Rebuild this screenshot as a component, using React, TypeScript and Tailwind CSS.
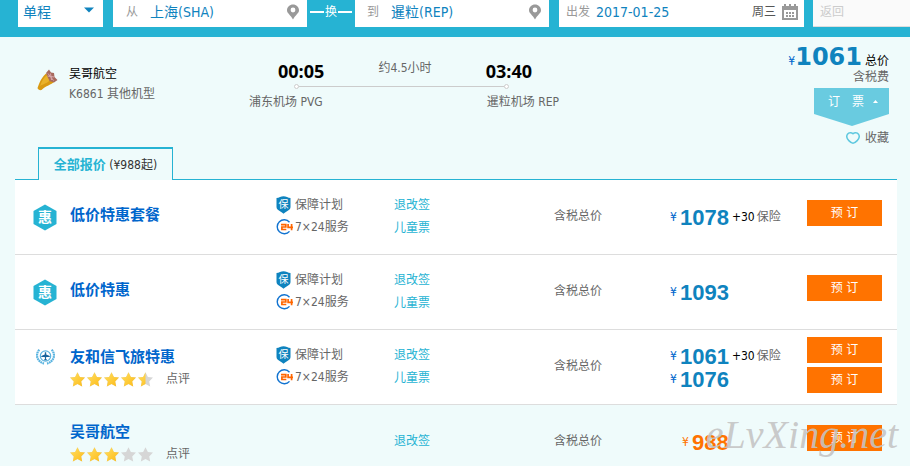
import { ReactNode, useState } from "react";

type Price = { amount: number; insurance?: number };

type Offer = {
  name: string;
  badge?: "deal" | "union";
  stars?: number;
  services: boolean;
  childTicket: boolean;
  prices: Price[];
  cheapest?: boolean;
};

const offers: Offer[] = [
  { name: "低价特惠套餐", badge: "deal", services: true, childTicket: true, prices: [{ amount: 1078, insurance: 30 }] },
  { name: "低价特惠", badge: "deal", services: true, childTicket: true, prices: [{ amount: 1093 }] },
  {
    name: "友和信飞旅特惠",
    badge: "union",
    stars: 4.5,
    services: true,
    childTicket: true,
    prices: [{ amount: 1061, insurance: 30 }, { amount: 1076 }],
  },
  { name: "吴哥航空", stars: 3, services: false, childTicket: false, prices: [{ amount: 988 }], cheapest: true },
];

const STAR = "M7.5 0.2 L9.9 4.9 L15 5.6 L11.2 9.4 L12.2 14.6 L7.5 12.1 L2.8 14.6 L3.8 9.4 L0 5.6 L5.1 4.9 Z";

const PinIcon = () => (
  <svg className="w-3 h-4 shrink-0" viewBox="0 0 12 16">
    <path
      fillRule="evenodd"
      fill="#999"
      d="M6 0.5 C2.7 0.5 0 3.1 0 6.2 C0 9.4 3.6 10.8 6 15.5 C8.4 10.8 12 9.4 12 6.2 C12 3.1 9.3 0.5 6 0.5 Z M6 3.6 A2.4 2.4 0 1 1 6 8.4 A2.4 2.4 0 1 1 6 3.6 Z"
    />
  </svg>
);

const CalendarIcon = () => (
  <svg className="w-4 h-4 shrink-0" viewBox="0 0 16 16" shapeRendering="crispEdges">
    <path fill="#999" d="M0 2h2V0h2v2h3V0h2v2h3V0h2v2h2v14H0z" />
    <path fill="#fff" d="M2 6h12v8H2z" />
    <path fill="#999" d="M7 8h2v2H7z M10 8h2v2h-2z M4 11h2v2H4z M7 11h2v2H7z M10 11h2v2h-2z M4 8h2v2H4z" />
  </svg>
);

const AirlineLogo = () => (
  <svg className="w-[21px] h-[22px]" viewBox="0 0 21 22">
    <path fill="#d99a12" d="M0.5 19 C2 16 2.5 10.5 9 4.5 L17.5 12.5 C14 16 9 16.5 4.5 21 C3 21.5 1 20.8 0.5 19 Z" />
    <path fill="#e9b32a" d="M3 17 C5 12 6.5 9 9.5 6.5 L13 11 C10 14.5 6 15 3 17 Z" />
    <path fill="#a86a5e" d="M9 4 L12 0.5 L14 3.5 L17 4 L17.5 8 L20.5 11 L17 13.5 L12.5 12 L10.5 7.5 Z" />
    <path stroke="#d9a9ae" strokeWidth="1" fill="none" d="M11 4.5 L16.5 11.5 M13.5 4.5 L14.5 11 M10.5 7 L17 8" />
  </svg>
);

const DealBadge = () => (
  <svg className="w-6 h-[27px]" viewBox="0 0 24 27">
    <path fill="#26b3d3" d="M12 0.5 L23.5 7 V20 L12 26.5 L0.5 20 V7 Z" />
    <text x="12" y="18" textAnchor="middle" fontSize="14" fontWeight="700" fill="#fff">
      惠
    </text>
  </svg>
);

const UnionBadge = () => (
  <svg className="w-[19px] h-4" viewBox="0 0 19 16">
    <g fill="none" stroke="#5ab4e0">
      <circle cx="9.5" cy="7" r="5.2" strokeWidth="1.2" />
      <path strokeWidth="2.2" strokeDasharray="1.8 0.5" d="M3.4 0.8 C-1 5 0.8 12.5 8 14.6 M15.6 0.8 C20 5 18.2 12.5 11 14.6" />
    </g>
    <path fill="#17639c" d="M8.8 3.2 h1.4 v2.4 l3.5 1.3 v1 h-3.5 l-0.2 2 1 0.8 v0.6 h-3 v-0.6 l1 -0.8 -0.2 -2 H5.3 v-1 l3.5 -1.3 Z" />
  </svg>
);

const ShieldIcon = () => (
  <svg className="w-[15px] h-[18px] shrink-0" viewBox="0 0 15 18">
    <path fill="#0f83be" d="M0.5 2 C3 2 5 0.3 7.5 0.3 C10 0.3 12 2 14.5 2 V11 C14.5 14.5 9.5 15.5 7.5 17.8 C5.5 15.5 0.5 14.5 0.5 11 Z" />
    <text x="7.5" y="12" textAnchor="middle" fontSize="10" fill="#fff">
      保
    </text>
  </svg>
);

const ServiceIcon = () => (
  <svg className="w-[17px] h-4 shrink-0" viewBox="0 0 17 16">
    <path fill="none" stroke="#1173d0" strokeWidth="1.4" d="M13.5 3.2 A7 7 0 1 0 13.5 12.4" />
    <path
      fill="none"
      stroke="#ff6600"
      strokeWidth="1.7"
      d="M5 5.7 H9.8 V8 H5.9 V10.5 H10.3 M12.1 5 V8.4 H17 M15.6 5 V11.2"
    />
  </svg>
);

const HeartIcon = () => (
  <svg className="w-[14px] h-3" viewBox="0 0 14 12">
    <path
      fill="none"
      stroke="#5fc8df"
      strokeWidth="1.5"
      d="M7 1.8 C5.5 0.4 2.8 0.5 1.5 2.2 C0.2 4.2 1 6.8 2.8 8.6 C4 9.8 5.6 11.2 7 11.2 C8.4 11.2 10 9.8 11.2 8.6 C13 6.8 13.8 4.2 12.5 2.2 C11.2 0.5 8.5 0.4 7 1.8 Z"
    />
  </svg>
);

const Stars = ({ value }: { value: number }) => (
  <svg className="w-[85px] h-[15px]" viewBox="0 0 85 15" role="img" aria-label={`${value} / 5`}>
    <defs>
      <linearGradient id="gold" x1="0" y1="0" x2="1" y2="1">
        <stop offset="0" stopColor="#ffe066" />
        <stop offset="1" stopColor="#fdb913" />
      </linearGradient>
      <clipPath id="half">
        <rect width="7.5" height="15" />
      </clipPath>
    </defs>
    {[0, 1, 2, 3, 4].map((i) => (
      <g key={i} transform={`translate(${i * 17} 0)`}>
        <path d={STAR} fill="#d6d6d6" />
        {value > i && <path d={STAR} fill="url(#gold)" clipPath={value - i < 1 ? "url(#half)" : undefined} />}
      </g>
    ))}
  </svg>
);

const Field = ({ id, label, value, className, children }: { id: string; label: string; value: string; className: string; children?: ReactNode }) => {
  const [text, setText] = useState(value);
  return (
    <div className={`flex h-[27px] min-w-0 grow items-center bg-white pb-1 ${className}`}>
      <label htmlFor={id} className="shrink-0 text-[#999]">{label}</label>
      <input
        id={id}
        value={text}
        onChange={(e) => setText(e.target.value)}
        className="min-w-0 flex-1 bg-transparent text-sm leading-5 text-[#0f83be] outline-none"
      />
      {children}
    </div>
  );
};

const SearchBar = () => (
  <header className="flex items-start bg-[#26b3d3] pl-[18px] pb-[10px]">
    <div className="relative flex h-[27px] w-[85px] shrink-0 bg-white">
      <select aria-label="行程类型" className="w-full appearance-none bg-transparent pl-[5px] pb-1 text-sm leading-5 text-[#0f83be] outline-none">
        <option>单程</option>
        <option>往返</option>
      </select>
      <svg className="pointer-events-none absolute right-[9px] top-[7px] w-[10px] h-[6px]" viewBox="0 0 10 6">
        <path fill="#0f83be" d="M0 0.5 H10 L5 5.5 Z" />
      </svg>
    </div>
    <Field id="from" label="从" value="上海(SHA)" className="ml-[10px] basis-[194px] pl-[13px] pr-2 gap-3">
      <PinIcon />
    </Field>
    <button type="button" className="flex h-6 w-12 shrink-0 items-center justify-center gap-px text-white">
      <span className="h-0.5 w-[14px] bg-white" />
      换
      <span className="h-0.5 w-[14px] bg-white" />
    </button>
    <Field id="to" label="到" value="暹粒(REP)" className="basis-[194px] pl-3 pr-2 gap-3">
      <PinIcon />
    </Field>
    <Field id="depart" label="出发" value="2017-01-25" className="ml-[10px] basis-[245px] pl-[7px] pr-[6px] gap-[6px]">
      <span className="shrink-0 text-[#555]">周三</span>
      <CalendarIcon />
    </Field>
    <div className="ml-[9px] flex h-[27px] w-[97px] shrink-0 items-center border-b border-[#ddd] bg-[#fafafa] pl-[7px] pb-0.5">
      <label htmlFor="return" className="text-[#ccc]">返回</label>
      <input id="return" disabled className="w-12 bg-transparent" />
    </div>
  </header>
);

const FlightSummary = () => (
  <section className="flex items-start pl-[37px] pr-[21px] h-[110px]">
    <div className="mt-8 w-8 shrink-0">
      <AirlineLogo />
    </div>
    <div className="mt-[27px] w-[180px] shrink-0 leading-5">
      <div className="text-black">吴哥航空</div>
      <div>K6861 其他机型</div>
    </div>
    <div className="mt-6 w-[310px] shrink-0">
      <div className="flex items-start justify-between pl-[29px] pr-[27px]">
        <b className="font-['Open_Sans'] text-lg leading-5 text-black">00:05</b>
        <span className="leading-[14px]">约4.5小时</span>
        <b className="font-['Open_Sans'] text-lg leading-5 text-black">03:40</b>
      </div>
      <svg className="ml-[45px] mt-[3px] block w-[215px] h-[5px]" viewBox="0 0 215 5">
        <path stroke="#ccc" d="M5 2.5 H210" />
        <circle cx="2.5" cy="2.5" r="2" fill="#fff" stroke="#ccc" />
        <circle cx="212.5" cy="2.5" r="2" fill="#fff" stroke="#ccc" />
      </svg>
      <div className="mt-[3px] flex justify-between leading-5">
        <span>浦东机场 PVG</span>
        <span>暹粒机场 REP</span>
      </div>
    </div>
    <div className="ml-auto mt-[6px] flex flex-col items-end">
      <div className="flex h-[26px] items-baseline leading-6">
        <span className="text-[#0066cc]">¥</span>
        <b className="font-['DejaVu_Sans'] text-2xl leading-7 text-[#0f83be]">1061</b>
        <span className="ml-[3px] text-black">总价</span>
      </div>
      <div className="leading-4">含税费</div>
      <button type="button" className="relative mt-[3px] flex h-[38px] w-[75px] items-start pl-[14px] text-white">
        <svg className="absolute inset-0 w-full h-full" viewBox="0 0 75 38">
          <path fill="#69cbe0" d="M0 0 H75 V26 L38 38 L0 26 Z" />
          <path fill="#fff" d="M59 15 L61.5 12 L64 15 Z" />
        </svg>
        <span className="relative leading-7">订　票</span>
      </button>
      <button type="button" className="mt-1 flex items-center gap-[5px] leading-4">
        <HeartIcon />
        收藏
      </button>
    </div>
  </section>
);

const OfferRow = ({ offer }: { offer: Offer }) => {
  const double = offer.prices.length > 1;
  return (
    <tr className={offer.cheapest ? "h-[60px]" : "h-[75px] bg-white [&>td]:border-b [&>td]:border-[#ddd]"}>
      <td className={offer.badge === "deal" ? "pt-6 pl-[18px]" : "pt-[19px] pl-[21px]"}>
        {offer.badge === "deal" && <DealBadge />}
        {offer.badge === "union" && <UnionBadge />}
      </td>
      <td className={offer.stars ? "pt-[17px]" : "pt-[25px]"}>
        <a href="#" className="text-[15px] font-bold leading-5 text-[#0066cc]">{offer.name}</a>
        {offer.stars && (
          <div className="mt-1 flex items-center gap-[11px] leading-4">
            <Stars value={offer.stars} />
            点评
          </div>
        )}
      </td>
      <td className="pt-[14px]">
        {offer.services && (
          <>
            <div className="flex h-[22px] items-center gap-1">
              <ShieldIcon />
              保障计划
            </div>
            <div className="flex h-[22px] items-center gap-0.5">
              <ServiceIcon />
              7×24服务
            </div>
          </>
        )}
      </td>
      <td className={offer.childTicket ? "pt-[14px]" : "pt-[25px]"}>
        <a href="#" className="block leading-[23px] text-[#26b3d3]">退改签</a>
        {offer.childTicket && <a href="#" className="block leading-[23px] text-[#26b3d3]">儿童票</a>}
      </td>
      <td className="pt-[26px] leading-5">含税总价</td>
      <td className={double ? "pt-[15px]" : "pt-[26px]"}>
        {offer.prices.map((p) => (
          <div key={p.amount} className={`flex items-center leading-[23px] ${offer.cheapest ? "pl-3 text-[#ff7300]" : "text-[#0f83be]"}`}>
            <span className={offer.cheapest ? "w-[10px]" : "w-[10px] text-[#0066cc]"}>¥</span>
            <b className="font-['Liberation_Sans'] text-[22px] leading-[23px]">{p.amount}</b>
            {p.insurance && (
              <span className="ml-[3px] text-[#666]">
                <span className="mr-0.5 text-black">+{p.insurance}</span>保险
              </span>
            )}
          </div>
        ))}
      </td>
      <td className={`pr-[15px] ${double ? "pt-[7px]" : "pt-5"}`}>
        <div className="flex flex-col gap-1">
          {offer.prices.map((p) => (
            <button key={p.amount} type="button" className="h-[26px] bg-[#ff7300] text-white">预 订</button>
          ))}
        </div>
      </td>
    </tr>
  );
};

export default function App() {
  return (
    <main className="relative min-h-screen min-w-[900px] overflow-hidden bg-[#effbfb] font-['DejaVu_Sans_Condensed','Noto_Sans_CJK_SC',sans-serif] text-xs text-[#666]">
      <SearchBar />
      <FlightSummary />

      <section className="pl-[15px] pr-[13px]">
        <div className="border-b border-[#26b3d3] pl-[23px]">
          <button type="button" className="relative -mb-px block h-[33px] w-[135px] border-x border-t-2 border-[#26b3d3] bg-[#effbfb] text-[#333]">
            <b className="text-[13px] text-[#26b3d3]">全部报价</b> (¥988起)
          </button>
        </div>
        <table className="w-full table-fixed border-separate border-spacing-0 [&_td]:align-top">
          <colgroup>
            <col className="w-[55px]" />
            <col />
            <col className="w-[118px]" />
            <col className="w-[160px]" />
            <col className="w-[116px]" />
            <col className="w-[137px]" />
            <col className="w-[90px]" />
          </colgroup>
          <tbody>
            {offers.map((offer) => (
              <OfferRow key={offer.name} offer={offer} />
            ))}
          </tbody>
        </table>
      </section>

      {/* 水印 */}
      <div className="pointer-events-none absolute bottom-2 right-3 font-['Liberation_Serif'] text-[40px] italic leading-[46px] text-[#c4c4c4]/90">
        eLvXing.net
      </div>
    </main>
  );
}
